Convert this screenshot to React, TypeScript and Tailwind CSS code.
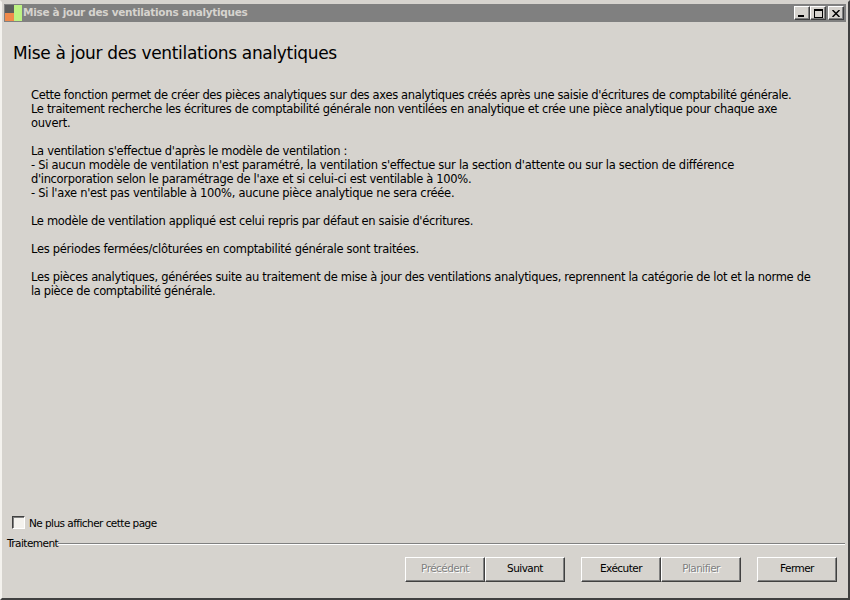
const WinButton = ({ label, disabled, className }: { label: string; disabled?: boolean; className?: string }) => (
  <button
    disabled={disabled}
    className={`w-20 h-[25px] pb-[2px] bg-[#d6d3ce] border border-t-white border-l-white border-r-[#404040] border-b-[#404040] shadow-[inset_-1px_-1px_0_#808080] text-[10.5px] tracking-[-0.55px] ${
      disabled ? 'text-[#808080] [text-shadow:1px_1px_0_#fff]' : 'text-black'
    } ${className ?? ''}`}
  >
    {label}
  </button>
);

const CaptionButton = ({ children, className }: { children: React.ReactNode; className?: string }) => (
  <div className={`w-[16px] h-[14px] bg-[#d6d3ce] border border-t-white border-l-white border-r-[#404040] border-b-[#404040] shadow-[inset_-1px_-1px_0_#808080] flex items-center justify-center ${className ?? ''}`}>
    {children}
  </div>
);

export default function App() {
  return (
    <div className="w-[850px] h-[600px] bg-[#d6d3ce] flex flex-col overflow-hidden border-2 border-t-[#d6d3ce] border-l-[#f4f2ee] border-r-[#404040] border-b-[#404040] p-[2px] pb-0 font-['DejaVu_Sans',sans-serif] text-black">
      <div className="h-[18px] bg-[#808080] flex items-center shrink-0">
        <div className="ml-[1px] w-[17px] h-4 flex shrink-0">
          <div className="w-[9px] h-full flex flex-col">
            <div className="h-2 bg-[#5c5c5c]" />
            <div className="h-2 bg-[#f08a4b]" />
          </div>
          <div className="w-[8px] h-full bg-[#bdf283]" />
        </div>
        <span className="ml-[1px] text-[10.5px] font-bold text-[#d6d3ce] tracking-[-0.3px]">Mise à jour des ventilations analytiques</span>
        <div className="ml-auto flex items-center pr-[2px]">
          <CaptionButton>
            <svg width="8" height="8" viewBox="0 0 8 8"><rect x="0" y="6" width="6" height="2" fill="#000" /></svg>
          </CaptionButton>
          <CaptionButton>
            <svg width="9" height="9" viewBox="0 0 9 9"><path d="M0 0h9v9H0z M1 2v6h7V2z" fill="#000" fillRule="evenodd" /></svg>
          </CaptionButton>
          <CaptionButton className="ml-[2px]">
            <svg width="8" height="7" viewBox="0 0 8 7"><path d="M0.5 0 L7.5 7 M7.5 0 L0.5 7" stroke="#000" strokeWidth="1.5" /></svg>
          </CaptionButton>
        </div>
      </div>

      <div className="flex-1 flex flex-col min-h-0">
        <h1 className="mt-[20px] ml-[9px] text-[17px] leading-[22px] font-normal tracking-[-0.33px]">Mise à jour des ventilations analytiques</h1>

        <div className="mt-[24px] ml-[27px] w-[790px] text-[11.5px] leading-[14px]">
          <p>
            <span className="tracking-[-0.34px]">Cette fonction permet de créer des pièces analytiques sur des axes analytiques créés après une saisie d'écritures de comptabilité générale.</span>
            <br />
            <span className="tracking-[-0.35px]">Le traitement recherche les écritures de comptabilité générale non ventilées en analytique et crée une pièce analytique pour chaque axe</span>
            <br />
            <span className="tracking-[-0.25px]">ouvert.</span>
          </p>
          <p className="mt-[14px]">
            <span className="tracking-[-0.32px]">La ventilation s'effectue d'après le modèle de ventilation :</span>
            <br />
            <span className="tracking-[-0.28px]">- Si aucun modèle de ventilation n'est paramétré, la ventilation s'effectue sur la section d'attente ou sur la section de différence</span>
            <br />
            <span className="tracking-[-0.33px]">d'incorporation selon le paramétrage de l'axe et si celui-ci est ventilable à 100%.</span>
            <br />
            <span className="tracking-[-0.3px]">- Si l'axe n'est pas ventilable à 100%, aucune pièce analytique ne sera créée.</span>
          </p>
          <p className="mt-[14px] tracking-[-0.34px]">Le modèle de ventilation appliqué est celui repris par défaut en saisie d'écritures.</p>
          <p className="mt-[14px] tracking-[-0.29px]">Les périodes fermées/clôturées en comptabilité générale sont traitées.</p>
          <p className="mt-[14px]">
            <span className="tracking-[-0.31px]">Les pièces analytiques, générées suite au traitement de mise à jour des ventilations analytiques, reprennent la catégorie de lot et la norme de</span>
            <br />
            <span className="tracking-[-0.36px]">la pièce de comptabilité générale.</span>
          </p>
        </div>

        <div className="mt-auto ml-[8px] flex items-center gap-[4px] h-[14px]">
          <div className="w-[13px] h-[13px] mb-[3px] bg-[#f4f2ee] border border-t-[#404040] border-l-[#404040] border-r-white border-b-white shadow-[inset_1px_1px_0_#808080]" />
          <span className="text-[10.5px] tracking-[-0.55px]">Ne plus afficher cette page</span>
        </div>

        <div className="mt-[6px] ml-[3px] mr-[1px] flex items-center h-[14px]">
          <span className="text-[10.5px] tracking-[-0.55px]">Traitement</span>
          <div className="flex-1 h-[2px] bg-[#808080] border-b border-b-white" />
        </div>

        <div className="mt-[6px] mb-[16px] mr-[9px] flex justify-end h-[25px]">
          <WinButton label="Précédent" disabled />
          <WinButton label="Suivant" />
          <WinButton label="Exécuter" className="ml-4" />
          <WinButton label="Planifier" disabled />
          <WinButton label="Fermer" className="ml-4" />
        </div>
      </div>
    </div>
  );
}
